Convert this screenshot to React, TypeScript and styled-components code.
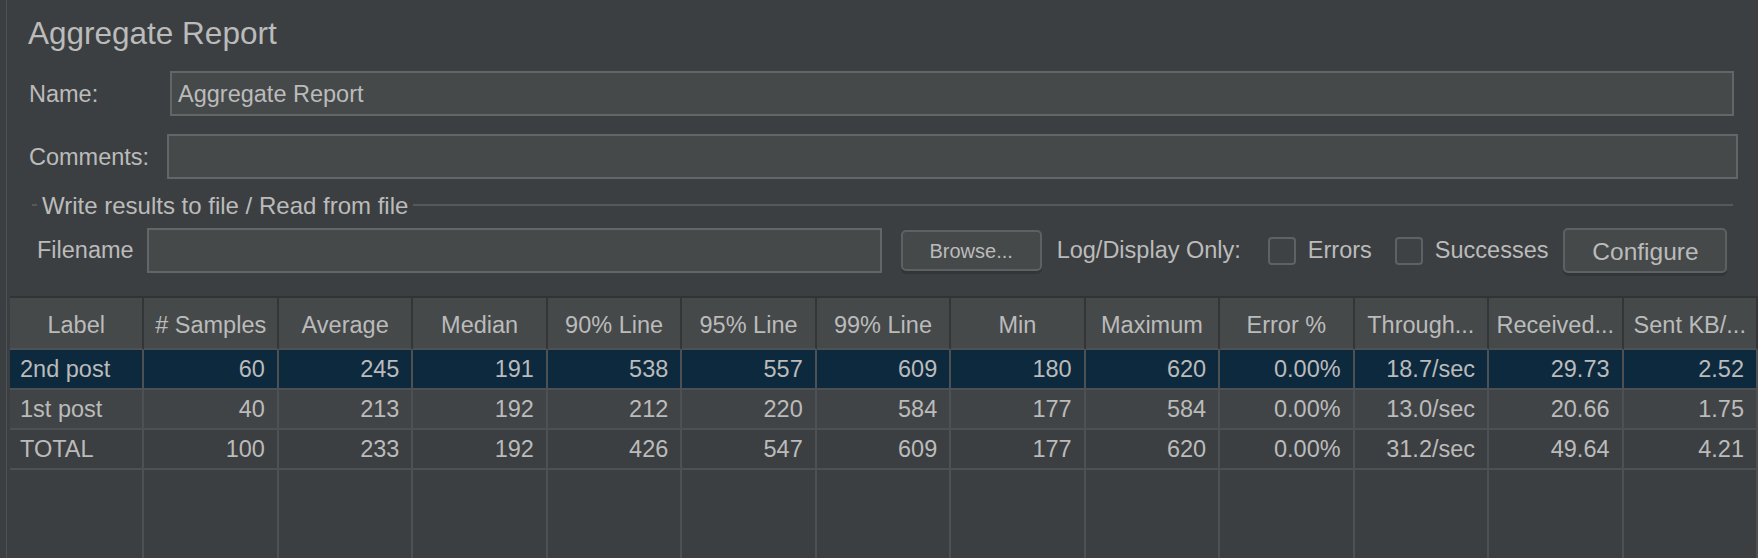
import React from "react";
import styled, { createGlobalStyle } from "styled-components";

const GlobalStyle = createGlobalStyle`
  html, body {
    margin: 0;
    padding: 0;
    background: #3c3f41;
  }
  body {
    font-family: "Liberation Sans", Arial, sans-serif;
    color: #bbbbbb;
  }
  * {
    box-sizing: border-box;
  }
`;

const Page = styled.div`
  height: 100vh;
  padding-left: 6px;
  display: flex;
  background: #3c3f41;
`;

const Panel = styled.div`
  flex: 1;
  min-width: 0;
  border-left: 1px solid #4f5254;
  display: flex;
  flex-direction: column;
`;

const Title = styled.h1`
  margin: 15px 0 0 21px;
  font-size: 31.5px;
  font-weight: normal;
  line-height: 36px;
  color: #bbbbbb;
`;

const Fields = styled.div`
  display: grid;
  grid-template-columns: 138px 1fr;
  row-gap: 18px;
  align-items: center;
  margin: 20px 20px 0 22px;
`;

const FieldLabel = styled.label`
  font-size: 23.5px;
  white-space: nowrap;
  padding-top: 2px;
`;

const TextField = styled.div<{ $inset?: boolean }>`
  height: 45px;
  margin: ${(p) => (p.$inset ? "0 4px 0 3px" : "0")};
  border: 2px solid #646566;
  background: #45494a;
  padding: 2px 0 0 6px;
  display: flex;
  align-items: center;
  font-size: 23.5px;
  color: #bbbbbb;
`;

const Group = styled.div`
  margin: 12px 25px 0 25px;
`;

const GroupHeading = styled.div`
  display: flex;
  align-items: center;
  height: 28px;
  font-size: 24px;
  white-space: nowrap;

  &::before {
    content: "";
    width: 5px;
    height: 2px;
    background: #56595b;
  }
  &::after {
    content: "";
    flex: 1;
    height: 2px;
    background: #56595b;
  }
  span {
    padding: 2px 5px 0;
  }
`;

const FileRow = styled.div`
  display: flex;
  align-items: center;
  height: 45px;
  margin-top: 9px;
  padding-left: 5px;
  font-size: 23.5px;
  white-space: nowrap;
`;

const FileInput = styled.div`
  width: 735px;
  height: 45px;
  margin-left: 13px;
  border: 2px solid #646566;
  background: #45494a;
`;

const Button = styled.button<{ $small?: boolean }>`
  height: ${(p) => (p.$small ? "41px" : "45px")};
  width: ${(p) => (p.$small ? "141px" : "164px")};
  margin-left: ${(p) => (p.$small ? "19px" : "15px")};
  border: 2px solid #5e6163;
  border-radius: 5px;
  background: #45494a;
  box-shadow: 0 3px 0 #333537;
  color: #bbbbbb;
  font-family: "Liberation Sans", Arial, sans-serif;
  font-size: ${(p) => (p.$small ? "20px" : "24.5px")};
  padding: 2px 0 0;
`;

const Caption = styled.span<{ $gap: number }>`
  margin-left: ${(p) => p.$gap}px;
`;

const CheckBox = styled.span<{ $gap: number }>`
  width: 28px;
  height: 28px;
  margin-left: ${(p) => p.$gap}px;
  border: 2px solid #5e6264;
  border-radius: 4px;
  background: #3f4244;
`;

const Table = styled.div`
  flex: 1;
  min-height: 0;
  margin: 23px 0 0 3px;
  border-top: 2px solid #313335;
  display: grid;
  grid-template-columns: repeat(13, 1fr);
  grid-template-rows: 52px repeat(3, 40px) 1fr;
  overflow: hidden;
`;

const HeadCell = styled.div`
  background: #45494a;
  border-right: 2px solid #333538;
  border-bottom: 2px solid #4e5153;
  display: flex;
  align-items: center;
  justify-content: center;
  padding-top: 4px;
  font-size: 23.5px;
  white-space: nowrap;
  overflow: hidden;
`;

const tones = {
  selected: "#0d293e",
  stripe: "#414446",
  plain: "#3c3f41",
};

const Cell = styled.div<{ $tone: keyof typeof tones; $left?: boolean }>`
  background: ${(p) => tones[p.$tone]};
  border-right: 2px solid #4e5153;
  border-bottom: 2px solid #4e5153;
  display: flex;
  align-items: center;
  justify-content: ${(p) => (p.$left ? "flex-start" : "flex-end")};
  padding: ${(p) => (p.$left ? "1px 0 0 10px" : "1px 12px 0 0")};
  font-size: 23.5px;
  white-space: nowrap;
  overflow: hidden;
`;

const FillerCell = styled.div`
  border-right: 2px solid #4e5153;
`;

const columns = [
  "Label",
  "# Samples",
  "Average",
  "Median",
  "90% Line",
  "95% Line",
  "99% Line",
  "Min",
  "Maximum",
  "Error %",
  "Through...",
  "Received...",
  "Sent KB/...",
];

const rows: { tone: keyof typeof tones; values: string[] }[] = [
  {
    tone: "selected",
    values: ["2nd post", "60", "245", "191", "538", "557", "609", "180", "620", "0.00%", "18.7/sec", "29.73", "2.52"],
  },
  {
    tone: "stripe",
    values: ["1st post", "40", "213", "192", "212", "220", "584", "177", "584", "0.00%", "13.0/sec", "20.66", "1.75"],
  },
  {
    tone: "plain",
    values: ["TOTAL", "100", "233", "192", "426", "547", "609", "177", "620", "0.00%", "31.2/sec", "49.64", "4.21"],
  },
];

const App = () => {
  return (
    <Page>
      <GlobalStyle />
      <Panel>
        <Title>Aggregate Report</Title>
        <Fields>
          <FieldLabel>Name:</FieldLabel>
          <TextField $inset>Aggregate Report</TextField>
          <FieldLabel>Comments:</FieldLabel>
          <TextField />
        </Fields>
        <Group>
          <GroupHeading>
            <span>Write results to file / Read from file</span>
          </GroupHeading>
          <FileRow>
            <span>Filename</span>
            <FileInput />
            <Button $small>Browse...</Button>
            <Caption $gap={15}>Log/Display Only:</Caption>
            <CheckBox $gap={27} />
            <Caption $gap={12}>Errors</Caption>
            <CheckBox $gap={23} />
            <Caption $gap={12}>Successes</Caption>
            <Button>Configure</Button>
          </FileRow>
        </Group>
        <Table>
          {columns.map((c) => (
            <HeadCell key={c}>{c}</HeadCell>
          ))}
          {rows.map((r) =>
            r.values.map((v, i) => (
              <Cell key={r.values[0] + i} $tone={r.tone} $left={i === 0}>
                {v}
              </Cell>
            ))
          )}
          {columns.map((c) => (
            <FillerCell key={"f" + c} />
          ))}
        </Table>
      </Panel>
    </Page>
  );
};

export default App;
